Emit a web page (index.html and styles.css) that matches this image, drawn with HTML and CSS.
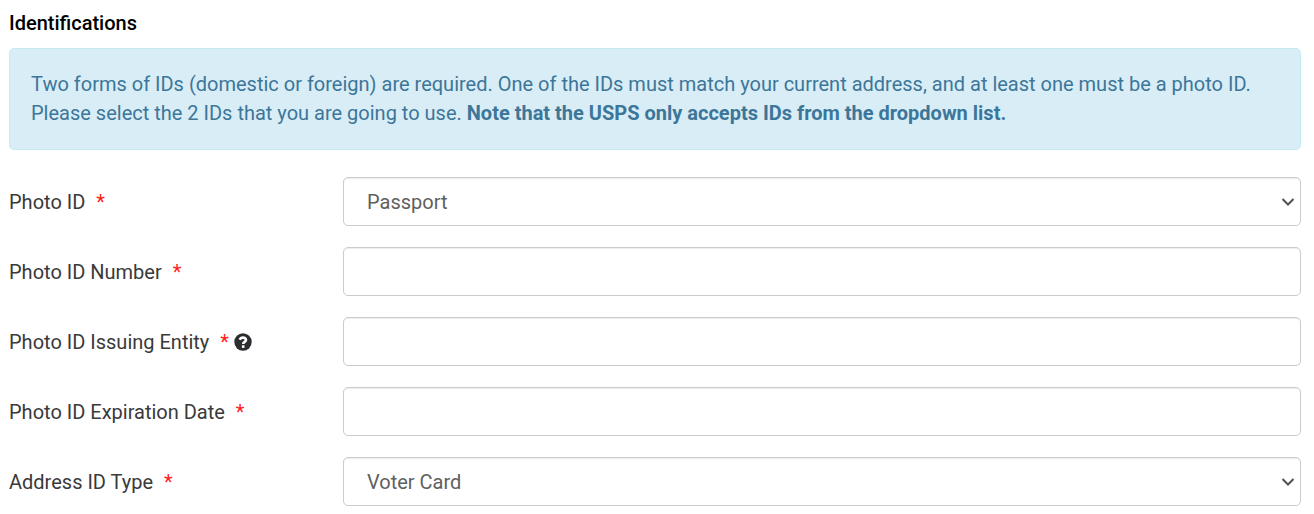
FILE: index.html
```html
<!DOCTYPE html>
<html lang="en">
<head>
<meta charset="UTF-8">
<meta name="viewport" content="width=device-width, initial-scale=1">
<title>Identifications</title>
<link rel="stylesheet" href="styles.css">
</head>
<body>

<form class="id-form">
  <h2 class="form-title">Identifications</h2>

  <div class="alert">
    Two forms of IDs (domestic or foreign) are required. One of the IDs must match your current address, and at least one must be a photo ID. Please select the 2 IDs that you are going to use. <strong>Note that the USPS only accepts IDs from the dropdown list.</strong>
  </div>

  <div class="form-row">
    <label for="photoId">Photo ID <span class="required">*</span></label>
    <div class="select-wrap">
      <select id="photoId" class="form-control" required>
        <option>Passport</option>
      </select>
      <svg class="chevron" viewBox="0 0 14 10" aria-hidden="true"><path d="M1.500 2 7 7.500 12.500 2"/></svg>
    </div>
  </div>

  <div class="form-row">
    <label for="photoIdNumber">Photo ID Number <span class="required">*</span></label>
    <input id="photoIdNumber" class="form-control" type="text" required>
  </div>

  <div class="form-row">
    <label for="photoIdEntity">Photo ID Issuing Entity <span class="required">*</span>
      <svg class="help" viewBox="0 0 18 18" aria-hidden="true">
        <circle cx="9" cy="9" r="8.700"/>
        <path d="M5.700 6.700C6.300 5.300 7.400 4.600 8.900 4.600c1.900 0 3.100 1 3.100 2.400C12 9 9.200 8.800 9.200 11"/>
        <path d="M9.200 12.300v2.600"/>
      </svg>
    </label>
    <input id="photoIdEntity" class="form-control" type="text" required>
  </div>

  <div class="form-row">
    <label for="photoIdExpiration">Photo ID Expiration Date <span class="required">*</span></label>
    <input id="photoIdExpiration" class="form-control" type="text" required>
  </div>

  <div class="form-row">
    <label for="addressIdType">Address ID Type <span class="required">*</span></label>
    <div class="select-wrap">
      <select id="addressIdType" class="form-control" required>
        <option>Voter Card</option>
      </select>
      <svg class="chevron" viewBox="0 0 14 10" aria-hidden="true"><path d="M1.500 2 7 7.500 12.500 2"/></svg>
    </div>
  </div>
</form>

</body>
</html>
```
FILE: styles.css
```css
* {
  box-sizing: border-box;
}
body {
  margin: 0;
  padding: 9px 13px 8px 9px;
  background: #fff;
  color: #3a3a3a;
  font-family: Roboto, "Liberation Sans", sans-serif;
  font-size: 20px;
  line-height: 28px;
}
.form-title {
  margin: 0 0 11px;
  color: #000;
  font-size: 20px;
  font-weight: 500;
}
.alert {
  margin-bottom: 27px;
  padding: 21px;
  border: 1px solid #c5eaf3;
  border-radius: 5px;
  background: #d9edf7;
  color: #3c7699;
  line-height: 29px;
}
.form-row {
  display: grid;
  grid-template-columns: 334px 1fr;
  align-items: center;
  margin-bottom: 21px;
}
.form-row:last-child {
  margin-bottom: 0;
}
.required {
  margin-left: 6px;
  color: #ff2020;
}
.help {
  width: 18px;
  height: 18px;
  vertical-align: -2px;
}
.help circle {
  fill: #2b2d31;
}
.help path {
  fill: none;
  stroke: #fff;
  stroke-width: 2.6;
}
.select-wrap {
  position: relative;
}
.form-control {
  display: block;
  width: 100%;
  height: 49px;
  padding: 0 23px;
  border: 1px solid #ccc;
  border-radius: 5px;
  background: #fff;
  color: #606060;
  font: inherit;
  box-shadow: inset 0 1px 1px rgba(0, 0, 0, 0.075);
  appearance: none;
}
.chevron {
  position: absolute;
  top: 20px;
  right: 6px;
  width: 14px;
  height: 10px;
  fill: none;
  stroke: #505050;
  stroke-width: 2;
  pointer-events: none;
}
```
